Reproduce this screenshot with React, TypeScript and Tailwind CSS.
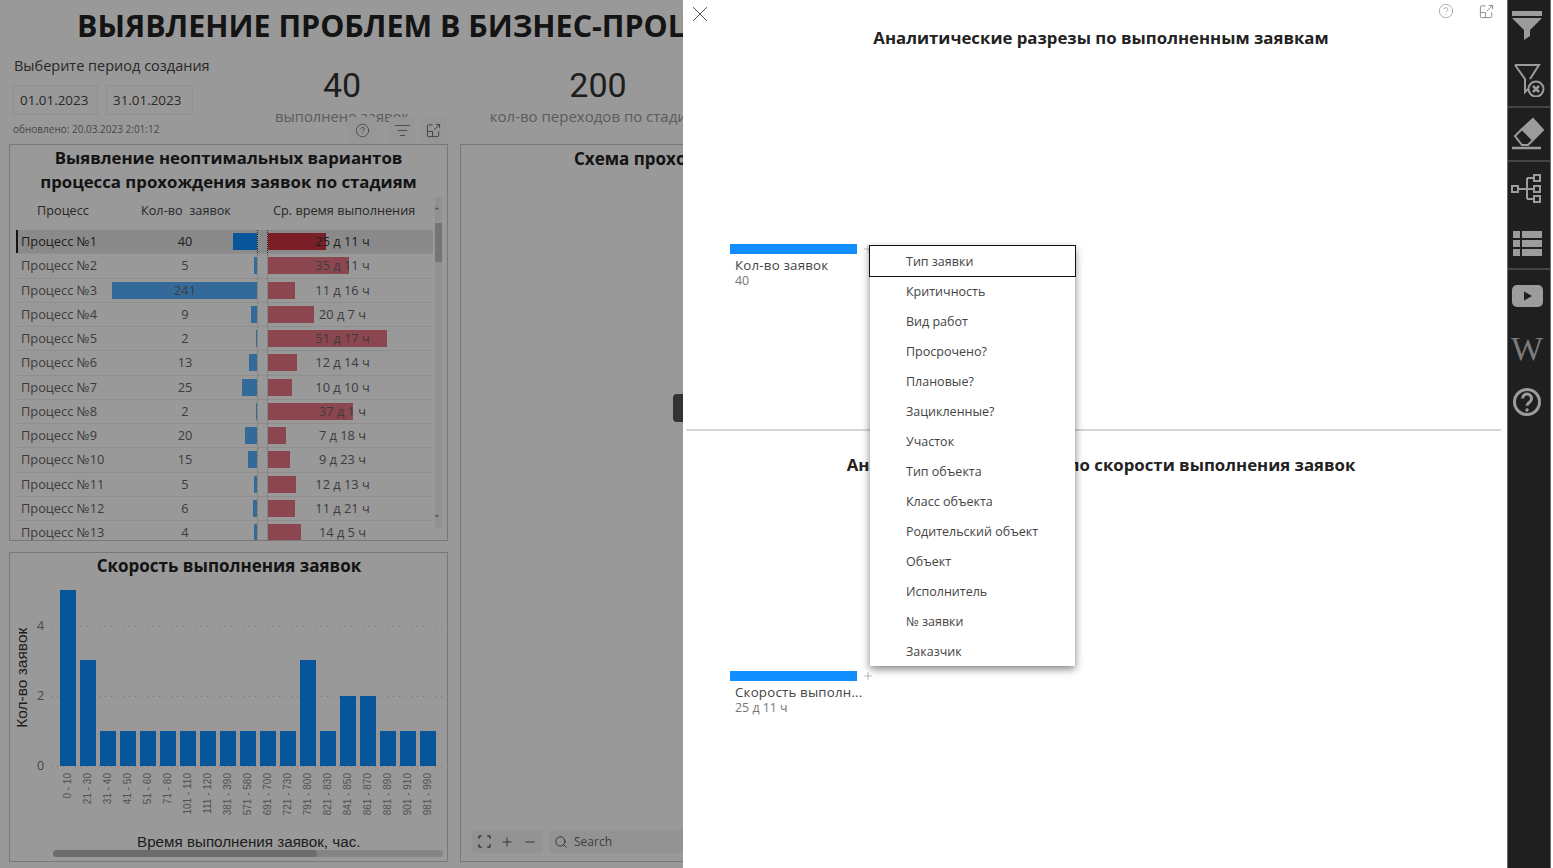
import { CircleHelp, ListFilter, Minus, Plus, Search, X } from "lucide-react";

const SANS = "font-['Open_Sans','Noto_Sans',sans-serif]";

const PROCESSES = [
  { name: "Процесс №1", count: 40, blue: 24, time: "25 д 11 ч", red: 58 },
  { name: "Процесс №2", count: 5, blue: 3, time: "35 д 11 ч", red: 81 },
  { name: "Процесс №3", count: 241, blue: 145, time: "11 д 16 ч", red: 27 },
  { name: "Процесс №4", count: 9, blue: 6, time: "20 д 7 ч", red: 46 },
  { name: "Процесс №5", count: 2, blue: 1, time: "51 д 17 ч", red: 119 },
  { name: "Процесс №6", count: 13, blue: 8, time: "12 д 14 ч", red: 29 },
  { name: "Процесс №7", count: 25, blue: 15, time: "10 д 10 ч", red: 24 },
  { name: "Процесс №8", count: 2, blue: 1, time: "37 д 1 ч", red: 85 },
  { name: "Процесс №9", count: 20, blue: 12, time: "7 д 18 ч", red: 18 },
  { name: "Процесс №10", count: 15, blue: 9, time: "9 д 23 ч", red: 22 },
  { name: "Процесс №11", count: 5, blue: 3, time: "12 д 13 ч", red: 28 },
  { name: "Процесс №12", count: 6, blue: 4, time: "11 д 21 ч", red: 27 },
  { name: "Процесс №13", count: 4, blue: 3, time: "14 д 5 ч", red: 33 },
];

const SPEED = [
  { label: "0 - 10", value: 5 },
  { label: "21 - 30", value: 3 },
  { label: "31 - 40", value: 1 },
  { label: "41 - 50", value: 1 },
  { label: "51 - 60", value: 1 },
  { label: "71 - 80", value: 1 },
  { label: "101 - 110", value: 1 },
  { label: "111 - 120", value: 1 },
  { label: "381 - 390", value: 1 },
  { label: "571 - 580", value: 1 },
  { label: "691 - 700", value: 1 },
  { label: "721 - 730", value: 1 },
  { label: "791 - 800", value: 3 },
  { label: "821 - 830", value: 1 },
  { label: "841 - 850", value: 2 },
  { label: "861 - 870", value: 2 },
  { label: "881 - 890", value: 1 },
  { label: "901 - 910", value: 1 },
  { label: "981 - 990", value: 1 },
];

const MENU = [
  "Тип заявки",
  "Критичность",
  "Вид работ",
  "Просрочено?",
  "Плановые?",
  "Зацикленные?",
  "Участок",
  "Тип объекта",
  "Класс объекта",
  "Родительский объект",
  "Объект",
  "Исполнитель",
  "№ заявки",
  "Заказчик",
];

function ExpandIcon({ className }: { className: string }) {
  return (
    <svg viewBox="0 0 16 16" fill="none" stroke="currentColor" strokeWidth="1" className={className}>
      <path d="M7 2H2.5a1 1 0 0 0-1 1v10.5a1 1 0 0 0 1 1h10a1 1 0 0 0 1-1V9" />
      <path d="M1.5 9H7v5.5" />
      <path d="M8.5 7.5 14.5 1.5M10.5 1.5h4v4" />
    </svg>
  );
}

function ProcessTable() {
  return (
    <div className="relative ml-[6px] mr-[5px] flex-1 overflow-hidden">
      <div className="flex h-[27px] items-center pt-[6px] text-[12.7px] text-[#444]">
        <span className="ml-[21px] w-[104px]">Процесс</span>
        <span className="w-[132px] whitespace-pre">Кол-во  заявок</span>
        <span>Ср. время выполнения</span>
      </div>
      <div className="mt-[9px] w-[417px]">
        {PROCESSES.map((p, i) => (
          <div
            key={p.name}
            className={`flex h-[24.25px] items-center border-b border-[#eeeeee] text-[12.8px] ${
              i === 0 ? "bg-[#e7e7e7] text-[#333]" : "text-[#6a6468]"
            }`}
          >
            <span className={`h-full w-[5px] ${i === 0 ? "border-l-2 border-[#222]" : ""}`} />
            <span className="w-[92px] whitespace-nowrap">{p.name}</span>
            <div
              className={`relative flex h-full w-[145px] items-center justify-center border-r border-dotted ${
                i === 0 ? "border-[#444]" : "border-[#bbbbbb]"
              }`}
            >
              <span
                className={`absolute right-0 top-[3px] h-[17px] ${i === 0 ? "bg-[#0e8eff]" : "bg-[#58b1ff]"}`}
                style={{ width: p.blue }}
              />
              <span className="relative">{p.count}</span>
            </div>
            <div
              className={`relative ml-[9px] flex h-full w-[150px] items-center justify-center border-l border-dotted ${
                i === 0 ? "border-[#444]" : "border-[#bbbbbb]"
              }`}
            >
              <span
                className={`absolute left-0 top-[3px] h-[17px] ${i === 0 ? "bg-[#cb3443]" : "bg-[#e97685]"}`}
                style={{ width: p.red }}
              />
              <span className="relative">{p.time}</span>
            </div>
          </div>
        ))}
      </div>
      <div className="absolute right-0 top-[3px] h-[331px] w-[7px] bg-[#f2f2f2]">
        <div className="mt-[26px] h-[39px] bg-[#c4c4c4]" />
      </div>
      <span className="absolute right-[1px] top-[12px] text-[9px] leading-none text-[#555]">⌃</span>
      <span className="absolute right-[1px] top-[315px] text-[9px] leading-none text-[#555]">⌄</span>
    </div>
  );
}

function SpeedChart() {
  return (
    <div className="relative flex flex-1 pl-[50px] pt-[12px]">
      <span className="absolute left-[-40px] top-[92px] w-[104px] -rotate-90 whitespace-nowrap text-center font-['Liberation_Sans',sans-serif] text-[15.5px] leading-none text-[#333]">
        Кол-во заявок
      </span>
      <div className="relative ml-[-1px] w-[392px]">
        <div className="relative flex h-[176px] items-end gap-[4px] pl-[1px]">
          {[36, 106, 176].map((top) => (
            <div
              key={top}
              className="absolute left-[-8px] right-0 h-px bg-[repeating-linear-gradient(90deg,#c4c4c4_0,#c4c4c4_1px,transparent_1px,transparent_6px)]"
              style={{ top }}
            />
          ))}
          {SPEED.map((s) => (
            <div key={s.label} className="relative w-[16px] bg-[#0e8eff]" style={{ height: s.value * 35.2 }} />
          ))}
          <span className="absolute left-[-22px] top-[30px] text-[12.5px] leading-none text-[#777]">4</span>
          <span className="absolute left-[-22px] top-[100px] text-[12.5px] leading-none text-[#777]">2</span>
          <span className="absolute left-[-22px] top-[170px] text-[12.5px] leading-none text-[#777]">0</span>
        </div>
        <div className="mt-[7px] flex h-[52px] items-start gap-[4px] pl-[1px]">
          {SPEED.map((s) => (
            <div key={s.label} className="flex w-[16px] justify-center">
              <span className="rotate-180 whitespace-nowrap font-['Liberation_Sans',sans-serif] text-[10px] leading-[16px] text-[#888] [writing-mode:vertical-rl]">
                {s.label}
              </span>
            </div>
          ))}
        </div>
        <div className="mt-[8px] whitespace-nowrap pl-[78px] font-['Liberation_Sans',sans-serif] text-[15.2px] leading-[18px] text-[#333]">
          Время выполнения заявок, час.
        </div>
      </div>
      <div className="absolute bottom-[4px] left-[43px] right-[4px] h-[7px] rounded bg-[#dddddd]">
        <div className="h-full w-[264px] rounded bg-[#b4b4b4]" />
      </div>
    </div>
  );
}

function Report() {
  return (
    <section className="relative h-full w-[683px] shrink-0 overflow-hidden bg-white">
      <div className="w-[1000px]">
        <h1 className="h-[52px] whitespace-nowrap pl-[77px] pt-[4px] text-[30.4px] font-bold leading-[44px] text-[#222]">
          ВЫЯВЛЕНИЕ ПРОБЛЕМ В БИЗНЕС-ПРОЦЕССАХ
        </h1>
        <div className="flex h-[92px]">
          <div className="w-[217px] pl-[13px]">
            <p className="h-[28px] pl-[1px] pt-[3px] text-[14.5px] leading-[22px] text-[#444]">Выберите период создания</p>
            <div className="mt-[5px] flex gap-[8px]">
              <span className="flex h-[30px] w-[85px] items-center border border-[#f0f0f0] pl-[6px] text-[13.4px] text-[#444]">01.01.2023</span>
              <span className="flex h-[30px] w-[87px] items-center border border-[#f0f0f0] pl-[6px] text-[13.4px] text-[#444]">31.01.2023</span>
            </div>
            <p className="mt-[7px] whitespace-nowrap text-[10px] leading-[14px] text-[#777]">обновлено: 20.03.2023 2:01:12</p>
          </div>
          <div className="w-[250px] pt-[12px] text-center">
            <div className="font-['Roboto',sans-serif] text-[34px] leading-[42px] text-[#333]">40</div>
            <div className="text-[14.7px] leading-[20px] text-[#999]">выполнено заявок</div>
          </div>
          <div className="w-[262px] pt-[12px] text-center">
            <div className="font-['Roboto',sans-serif] text-[34px] leading-[42px] text-[#333]">200</div>
            <div className="whitespace-nowrap text-[15px] leading-[20px] text-[#999]">кол-во переходов по стадиям</div>
          </div>
        </div>
        <div className="flex h-[724px] gap-[12px] pl-[9px]">
          <div className="flex w-[439px] flex-col">
            <div className="relative flex h-[397px] flex-col border border-[#c8c8c8]">
              <div className="absolute right-0 top-[-28px] flex h-[27px]">
                <span className="flex w-[28px] items-center justify-center bg-[#fbfbfb] text-[#666]">
                  <CircleHelp size={15} strokeWidth={1.2} />
                </span>
                <span className="ml-[13px] flex w-[26px] items-center justify-center bg-[#fbfbfb] text-[#666]">
                  <ListFilter size={17} strokeWidth={1.2} />
                </span>
                <span className="ml-[5px] flex w-[27px] items-center justify-center bg-[#fbfbfb] text-[#666]">
                  <ExpandIcon className="h-[15px] w-[15px]" />
                </span>
              </div>
              <h2 className="pt-[1px] text-center text-[16.8px] font-bold leading-[24px] text-[#222]">
                Выявление неоптимальных вариантов
                <br />
                процесса прохождения заявок по стадиям
              </h2>
              <ProcessTable />
            </div>
            <div className="mt-[11px] flex h-[310px] flex-col border border-[#c8c8c8]">
              <h2 className="pl-[1px] pt-[1px] text-center text-[17px] font-bold leading-[24px] text-[#222]">Скорость выполнения заявок</h2>
              <SpeedChart />
            </div>
          </div>
          <div className="relative h-[718px] w-[520px] border border-[#c8c8c8]">
            <h2 className="whitespace-nowrap pl-[113px] pt-[1px] text-[17px] font-bold leading-[26px] text-[#222]">Схема прохождения заявок</h2>
            <div className="absolute bottom-[8px] left-[11px] flex h-[23px] items-center gap-[6px]">
              <div className="flex h-full w-[71px] items-center justify-around rounded bg-[#f6f6f6] px-[2px] text-[#444]">
                <svg viewBox="0 0 14 14" fill="none" stroke="currentColor" strokeWidth="1.3" className="h-[13px] w-[13px]">
                  <path d="M1 4V2a1 1 0 0 1 1-1h2M10 1h2a1 1 0 0 1 1 1v2M13 10v2a1 1 0 0 1-1 1h-2M4 13H2a1 1 0 0 1-1-1v-2" />
                </svg>
                <Plus size={14} strokeWidth={1.5} />
                <Minus size={14} strokeWidth={1.5} />
              </div>
              <div className="flex h-full w-[200px] items-center gap-[6px] rounded bg-[#f6f6f6] pl-[5px] text-[12px] text-[#666]">
                <Search size={14} strokeWidth={1.5} className="text-[#444]" />
                Search
              </div>
            </div>
          </div>
        </div>
      </div>
      <div className="absolute inset-0 bg-black/40" />
      <div className="absolute right-0 top-[394px] h-[28px] w-[10px] rounded-l-[4px] bg-[#333]" />
    </section>
  );
}

function TreeNode({ label, value }: { label: string; value: string }) {
  return (
    <div className="ml-[47px] w-[150px]">
      <div className="flex items-center">
        <span className="h-[10px] w-[127px] bg-[#118dff]" />
        <Plus size={12} strokeWidth={1.3} className="ml-[5px] text-[#999]" />
      </div>
      <div className="mt-[2px] w-[130px] whitespace-nowrap pl-[5px] text-[13.3px] leading-[17px] tracking-[0.2px] text-[#444]">{label}</div>
      <div className="pl-[5px] text-[12.4px] leading-[14px] text-[#777]">{value}</div>
    </div>
  );
}

function Modal() {
  return (
    <section className="relative flex h-full w-[824px] shrink-0 flex-col bg-white">
      <div className="absolute left-[4px] top-[1px] text-[#444]">
        <X size={26} strokeWidth={0.9} />
      </div>
      <div className="absolute right-[53px] top-[3px] text-[#888]">
        <CircleHelp size={16} strokeWidth={1} />
      </div>
      <div className="absolute right-[13px] top-[4px] text-[#888]">
        <ExpandIcon className="h-[15px] w-[15px]" />
      </div>
      <div className="ml-[3px] mr-[6px] h-[431px] border-b-2 border-[#d6d6d6]">
        <h2 className="pl-[15px] pt-[25px] text-center text-[16.8px] font-bold leading-[26px] text-[#222]">Аналитические разрезы по выполненным заявкам</h2>
        <div className="-ml-[3px] mt-[192px]">
          <TreeNode label="Кол-во заявок" value="40" />
        </div>
      </div>
      <h2 className="pl-[12px] pt-[21px] text-center text-[16.8px] font-bold leading-[26px] text-[#222]">Аналитические разрезы по скорости выполнения заявок</h2>
      <div className="mt-[192px]">
        <TreeNode label="Скорость выполн..." value="25 д 11 ч" />
      </div>
      <ul className="absolute left-[187px] top-[246px] w-[205px] bg-white text-[12.5px] text-[#444] shadow-[0_3px_8px_rgba(0,0,0,0.5)]">
        {MENU.map((item, i) => (
          <li key={item} className={`flex h-[30px] items-center pl-[36px] pt-[2px] ${i === 0 ? "outline-[1.5px] outline-[#111]" : ""}`}>
            {item}
          </li>
        ))}
      </ul>
    </section>
  );
}

function SideButton({ h, children }: { h: string; children: React.ReactNode }) {
  return <div className={`flex items-center justify-center pr-[4px] ${h}`}>{children}</div>;
}

function Sidebar() {
  return (
    <aside className="flex h-full w-[44px] shrink-0 flex-col border-x border-[#6a6a6a] bg-[#1f1f1f] text-[#9c9c9c]">
      <div className="h-[108px] border-b-2 border-[#444]">
        <SideButton h="h-[52px]">
          <svg viewBox="0 0 36 36" className="h-[36px] w-[36px]" fill="currentColor">
            <path d="M3 3h30v5H3zM3 10h30L21 22v6l-6 4V22z" />
          </svg>
        </SideButton>
        <SideButton h="h-[54px]">
          <svg viewBox="0 0 36 36" className="h-[36px] w-[36px]" fill="none" stroke="currentColor" strokeWidth="2">
            <path d="M6 4h24L21 18M6 4l10 14v13l3-3" />
            <circle cx="27" cy="28" r="7.5" />
            <path d="m24 25 6 6m0-6-6 6" strokeWidth="2.5" />
          </svg>
        </SideButton>
      </div>
      <div className="h-[54px] border-b-2 border-[#444]">
        <SideButton h="h-[52px]">
          <svg viewBox="0 0 36 36" className="h-[36px] w-[36px]" fill="none" stroke="currentColor" strokeWidth="2">
            <path d="M24 3 34 14 24 24 13 13z" fill="currentColor" />
            <path d="M13 13 6 20l7 9h6l5-5" />
            <path d="M3 32h29" strokeWidth="2.5" />
          </svg>
        </SideButton>
      </div>
      <div className="h-[108px] border-b-2 border-[#444]">
        <SideButton h="h-[54px]">
          <svg viewBox="0 0 36 36" className="h-[36px] w-[36px]" fill="none" stroke="currentColor" strokeWidth="2">
            <rect x="3" y="15" width="6" height="6" />
            <rect x="25" y="4" width="6" height="6" />
            <rect x="25" y="15" width="6" height="6" />
            <rect x="25" y="25" width="6" height="6" />
            <path d="M9 18h16M18 7v21M18 7h7M18 28h7" />
          </svg>
        </SideButton>
        <SideButton h="h-[52px]">
          <svg viewBox="0 0 36 36" className="h-[36px] w-[36px]" fill="currentColor">
            <path d="M4 7h7v7H4zM13 7h20v7H13zM4 16h7v7H4zM13 16h20v7H13zM4 25h7v7H4zM13 25h20v7H13z" />
          </svg>
        </SideButton>
      </div>
      <SideButton h="h-[52px]">
        <svg viewBox="0 0 36 36" className="h-[36px] w-[36px]">
          <rect x="3" y="7" width="31" height="22" rx="5" fill="currentColor" />
          <path d="M15 13.5 23 18l-8 4.5z" fill="#1f1f1f" />
        </svg>
      </SideButton>
      <SideButton h="h-[54px]">
        <span className="font-['Liberation_Serif',serif] text-[34px] leading-none text-[#7c7c7c]">W</span>
      </SideButton>
      <SideButton h="h-[52px]">
        <svg viewBox="0 0 36 36" className="h-[36px] w-[36px]" fill="none" stroke="currentColor">
          <circle cx="18" cy="18" r="12.5" strokeWidth="3" />
          <path d="M13.5 14.5a4.5 4.5 0 1 1 7 3.7c-1.6 1-2.5 1.8-2.5 3.6" strokeWidth="3" />
          <circle cx="18" cy="26" r="1.7" fill="currentColor" stroke="none" />
        </svg>
      </SideButton>
    </aside>
  );
}

export default function App() {
  return (
    <div className={`flex h-[868px] w-[1553px] overflow-hidden bg-white ${SANS}`}>
      <Report />
      <Modal />
      <Sidebar />
    </div>
  );
}
